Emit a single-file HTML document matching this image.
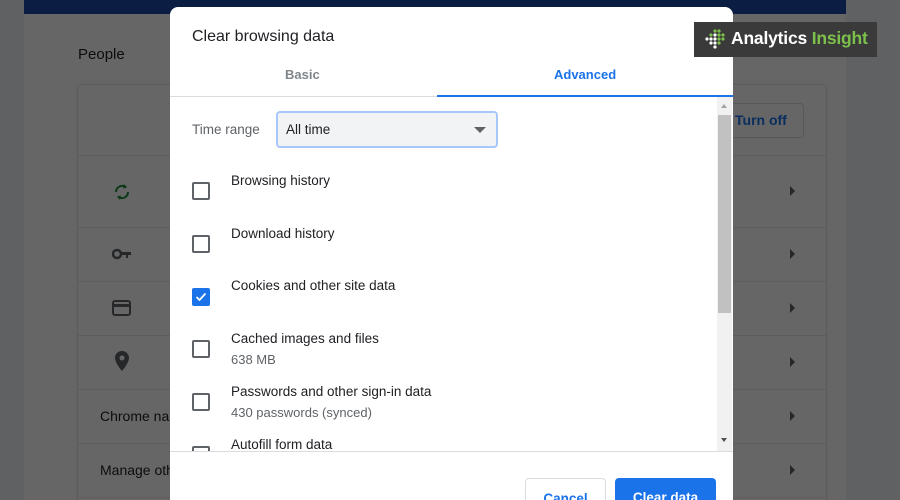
<!DOCTYPE html>
<html><head><meta charset="utf-8"><style>
*{box-sizing:border-box;margin:0;padding:0}
html,body{width:900px;height:500px;overflow:hidden}
body{background:#f1f3f4;font-family:"Liberation Sans",sans-serif;position:relative}
.main{position:absolute;left:24px;top:0;width:822px;height:500px;background:#ffffff}
.topbar{position:absolute;left:24px;top:0;width:822px;height:14px;background:#1e4aa8}
.people{position:absolute;left:78px;top:46px;font-size:15px;color:#202124}
.card{position:absolute;left:78px;top:85px;width:748px;height:420px;background:#fff;border-radius:4px;box-shadow:0 0 2px rgba(0,0,0,.3)}
.sep{position:absolute;left:78px;width:748px;height:1px;background:#e8e8e8}
.arr{position:absolute;left:790px;width:0;height:0;border-top:5px solid transparent;border-bottom:5px solid transparent;border-left:5px solid #5f6368}
.lt{position:absolute;left:100px;font-size:14px;color:#202124}
.turnoff{position:absolute;left:720px;top:103px;width:84px;height:35px;border:1px solid #dadce0;border-radius:4px;color:#1a73e8;font-size:14px;line-height:33px;padding-left:14px;font-weight:bold}
.ov{position:absolute;left:0;top:0;width:900px;height:500px;background:rgba(0,0,0,0.6)}
.dlg{position:absolute;left:170px;top:7px;width:563px;height:493px;background:#fff;border-radius:8px 8px 0 0;overflow:hidden}
.title{position:absolute;left:22px;top:21px;font-size:16px;color:#202124}
.tab{position:absolute;top:60px;font-size:13px;font-weight:bold}
.hr{position:absolute;left:0;top:89px;width:563px;height:1px;background:#dadce0}
.ul{position:absolute;left:267px;top:88px;width:296px;height:2px;background:#1a73e8}
.tr{position:absolute;left:22px;top:115px;font-size:13.5px;color:#5f6368}
.sel{position:absolute;left:106px;top:104px;width:222px;height:37px;background:#f1f3f4;border:2px solid #a8c7fa;border-radius:4px;font-size:13.5px;color:#202124;padding:9px 0 0 8px}
.sel:after{content:"";position:absolute;right:10px;top:14px;border-left:6px solid transparent;border-right:6px solid transparent;border-top:6px solid #5f6368}
.cb{position:absolute;left:22px;width:18px;height:18px;border:2px solid #5f6368;border-radius:2px}
.cb.on{background:#1a73e8;border-color:#1a73e8}
.l1{position:absolute;left:61px;font-size:13.5px;color:#202124}
.l2{position:absolute;left:61px;font-size:13px;color:#5f6368}
.sb{position:absolute;left:547px;top:90px;width:15px;height:354px;background:#f1f1f1}
.thumb{position:absolute;left:548px;top:108px;width:13px;height:198px;background:#c1c1c1}
.fhr{position:absolute;left:0;top:444px;width:563px;height:1px;background:#dadce0}
.btn{position:absolute;top:471px;height:36px;border-radius:4px;font-size:13.5px;font-weight:bold;text-align:center;line-height:40px}
</style></head><body>
<div class="main"></div>
<div class="topbar"></div>
<div class="people">People</div>
<div class="card"></div>
<div class="sep" style="top:155px"></div>
<div class="sep" style="top:227px"></div>
<div class="sep" style="top:281px"></div>
<div class="sep" style="top:335px"></div>
<div class="sep" style="top:389px"></div>
<div class="sep" style="top:443px"></div>
<div class="sep" style="top:497px"></div>
<div class="turnoff">Turn off</div>
<svg style="position:absolute;left:112px;top:182px" width="20" height="20" viewBox="0 0 20 20"><path d="M4 10a6 6 0 0 1 10-4.5M16 10a6 6 0 0 1-10 4.5" stroke="#1e8e3e" stroke-width="2" fill="none"/><path d="M12 2l3 3.5-4 1z M8 18l-3-3.5 4-1z" fill="#1e8e3e"/></svg>
<svg style="position:absolute;left:112px;top:247px" width="20" height="14" viewBox="0 0 20 14"><circle cx="5" cy="7" r="4" fill="none" stroke="#5f6368" stroke-width="2.5"/><rect x="8" y="5" width="11" height="3" fill="#5f6368"/><rect x="14" y="7" width="2" height="4" fill="#5f6368"/></svg>
<svg style="position:absolute;left:112px;top:300px" width="20" height="16"><rect x="1" y="1" width="17" height="14" rx="2" fill="none" stroke="#5f6368" stroke-width="2"/><rect x="1" y="4" width="17" height="3" fill="#5f6368"/></svg>
<svg style="position:absolute;left:115px;top:351px" width="14" height="20" viewBox="0 0 14 20"><path d="M7 0a7 7 0 0 0-7 7c0 5 7 13 7 13s7-8 7-13a7 7 0 0 0-7-7z" fill="#5f6368"/><circle cx="7" cy="7" r="2.5" fill="#fff"/></svg>
<div class="lt" style="top:408px">Chrome na</div>
<div class="lt" style="top:462px">Manage oth</div>
<div class="arr" style="top:186px"></div>
<div class="arr" style="top:249px"></div>
<div class="arr" style="top:303px"></div>
<div class="arr" style="top:357px"></div>
<div class="arr" style="top:411px"></div>
<div class="arr" style="top:465px"></div>
<div class="ov"></div>
<div class="dlg">
<div class="title">Clear browsing data</div>
<div class="tab" style="left:115px;color:#80868b">Basic</div>
<div class="tab" style="left:384px;color:#1a73e8">Advanced</div>
<div class="hr"></div><div class="ul"></div>
<div class="tr">Time range</div>
<div class="sel">All time</div>
<div class="cb" style="top:175px"></div><div class="l1" style="top:166px">Browsing history</div>
<div class="cb" style="top:228px"></div><div class="l1" style="top:219px">Download history</div>
<div class="cb on" style="top:281px"><svg width="14" height="14" style="position:absolute;left:0;top:0"><path d="M2.5 7l3 3 6-6.5" stroke="#fff" stroke-width="1.8" fill="none"/></svg></div><div class="l1" style="top:271px">Cookies and other site data</div>
<div class="cb" style="top:333px"></div><div class="l1" style="top:324px">Cached images and files</div><div class="l2" style="top:345px">638 MB</div>
<div class="cb" style="top:386px"></div><div class="l1" style="top:377px">Passwords and other sign-in data</div><div class="l2" style="top:398px">430 passwords (synced)</div>
<div class="cb" style="top:439px"></div><div class="l1" style="top:430px">Autofill form data</div>
<div style="position:absolute;left:0;top:445px;width:563px;height:60px;background:#fff"></div>
<div class="sb"></div><div class="thumb"></div>
<div style="position:absolute;left:551px;top:97px;border-left:3.5px solid transparent;border-right:3.5px solid transparent;border-bottom:4px solid #a3a3a3"></div>
<div style="position:absolute;left:551px;top:431px;border-left:3.5px solid transparent;border-right:3.5px solid transparent;border-top:4px solid #505050"></div>
<div class="fhr"></div>
<div class="btn" style="left:355px;width:81px;border:1px solid #dadce0;color:#1a73e8">Cancel</div>
<div class="btn" style="left:445px;width:101px;background:#1a73e8;color:#fff">Clear data</div>
</div>
<div style="position:absolute;left:694px;top:22px;width:183px;height:35px;background:#3a3a3a"></div>
<svg style="position:absolute;left:703px;top:28px" width="24" height="24"><g fill="#7cc04b"><circle cx="12" cy="3" r="1.6"/><circle cx="16" cy="3" r="1.6"/><circle cx="8" cy="7" r="1.6"/><circle cx="16" cy="7" r="1.6"/><circle cx="20" cy="7" r="1.6"/><circle cx="16" cy="11" r="1.6"/><circle cx="20" cy="11" r="1.6"/><circle cx="16" cy="15" r="1.6"/></g><g fill="#fff"><circle cx="4" cy="11" r="1.6"/><circle cx="8" cy="11" r="1.6"/><circle cx="12" cy="11" r="1.6"/><circle cx="12" cy="7" r="1.6"/><circle cx="8" cy="15" r="1.6"/><circle cx="12" cy="15" r="1.6"/><circle cx="12" cy="19" r="1.6"/></g></svg>
<div style="position:absolute;left:731px;top:28px;font-size:17.5px;font-weight:bold;color:#fff;letter-spacing:-0.2px">Analytics <span style="color:#7cc04b">Insight</span></div>
</body></html>
